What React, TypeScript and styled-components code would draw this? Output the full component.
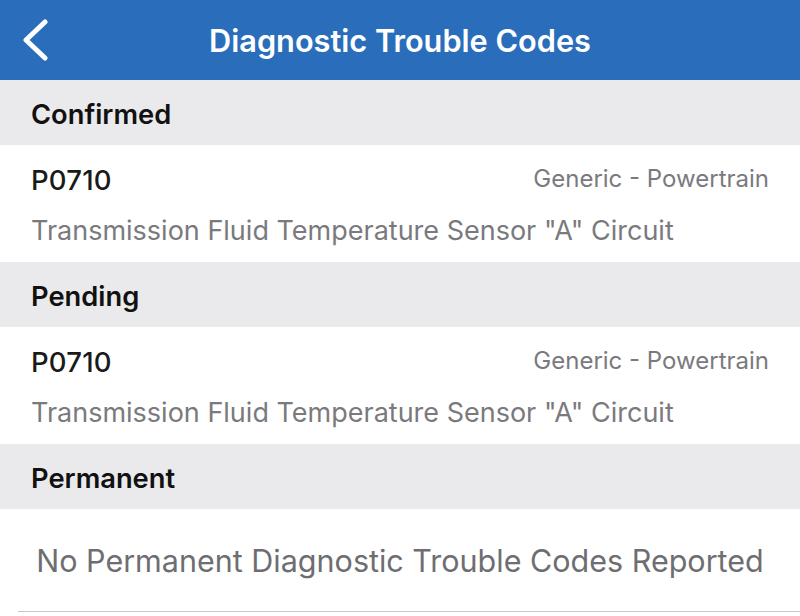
import React from "react";
import styled, { createGlobalStyle } from "styled-components";

const Global = createGlobalStyle`
  html, body { margin: 0; padding: 0; background: #ffffff; }
  body { font-family: Inter, "Noto Sans", sans-serif; -webkit-font-smoothing: antialiased; }
`;

const Screen = styled.div`
  width: 800px;
  height: 616px;
  overflow: hidden;
  display: flex;
  flex-direction: column;
  background: #ffffff;
`;

const NavBar = styled.header`
  height: 80px;
  background: #2a6ebb;
  display: grid;
  grid-template-columns: 80px 1fr 80px;
  align-items: center;
  flex-shrink: 0;
`;

const BackButton = styled.button`
  border: 0;
  background: none;
  padding: 0 0 0 21px;
  height: 80px;
  display: flex;
  align-items: center;
  cursor: pointer;
`;

const Title = styled.h1`
  margin: 0;
  text-align: center;
  color: #ffffff;
  font-size: 30.7px;
  font-weight: 600;
  letter-spacing: 0px;
`;

const SectionHeader = styled.div`
  height: 65px;
  box-sizing: border-box;
  padding: 3px 0 0 31px;
  background: #eaeaec;
  display: flex;
  align-items: center;
  font-size: 27.3px;
  font-weight: 600;
  color: #111111;
  flex-shrink: 0;
`;

const CodeRow = styled.div`
  height: 117px;
  box-sizing: border-box;
  padding: 20px 31px 0;
  display: flex;
  flex-direction: column;
  gap: 21px;
  flex-shrink: 0;
`;

const CodeTop = styled.div`
  display: flex;
  justify-content: space-between;
  align-items: baseline;
  height: 30px;
`;

const Code = styled.span`
  font-size: 27.5px;
  font-weight: 500;
  color: #1a1a1a;
  line-height: 30px;
  letter-spacing: 0.2px;
`;

const Category = styled.span`
  font-size: 24px;
  color: #7a7a7e;
  line-height: 30px;
  position: relative;
  top: -3px;
`;

const Description = styled.div`
  font-size: 27px;
  color: #7a7a7e;
  line-height: 30px;
`;

const EmptyBlock = styled.div`
  height: 102px;
  margin-left: 18px;
  border-bottom: 1px solid #c8c8cc;
  display: flex;
  align-items: center;
  justify-content: center;
  padding-right: 18px;
  font-size: 30.5px;
  color: #6e6e72;
`;

type Dtc = { code: string; category: string; description: string };

const Row: React.FC<{ dtc: Dtc }> = ({ dtc }) => (
  <CodeRow>
    <CodeTop>
      <Code>{dtc.code}</Code>
      <Category>{dtc.category}</Category>
    </CodeTop>
    <Description>{dtc.description}</Description>
  </CodeRow>
);

const dtc: Dtc = {
  code: "P0710",
  category: "Generic - Powertrain",
  description: 'Transmission Fluid Temperature Sensor "A" Circuit',
};

export default function App() {
  return (
    <Screen>
      <Global />
      <NavBar>
        <BackButton aria-label="Back">
          <svg width="28" height="42" viewBox="0 0 28 42">
            <path d="M24 3 L5 21 L24 39" fill="none" stroke="#ffffff" strokeWidth="5" strokeLinecap="round" strokeLinejoin="round" />
          </svg>
        </BackButton>
        <Title>Diagnostic Trouble Codes</Title>
        <span />
      </NavBar>
      <SectionHeader>Confirmed</SectionHeader>
      <Row dtc={dtc} />
      <SectionHeader>Pending</SectionHeader>
      <Row dtc={dtc} />
      <SectionHeader>Permanent</SectionHeader>
      <EmptyBlock>No Permanent Diagnostic Trouble Codes Reported</EmptyBlock>
    </Screen>
  );
}
